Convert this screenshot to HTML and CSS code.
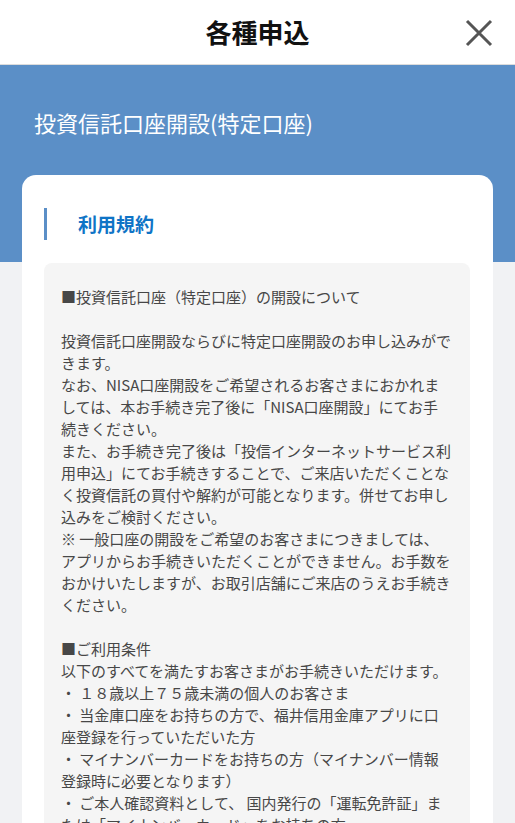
FILE: index.html
```html
<!DOCTYPE html>
<html lang="ja">
<head>
<meta charset="utf-8">
<title>各種申込</title>
<link rel="stylesheet" href="styles.css">
</head>
<body>
<header class="topbar">
  <h1 class="topbar-title">各種申込</h1>
  <button class="close-btn" type="button" aria-label="閉じる">
    <svg width="28" height="28" viewBox="0 0 28 28" aria-hidden="true">
      <path d="M2 2 L26 26 M26 2 L2 26" stroke="#555" stroke-width="3" stroke-linecap="butt" fill="none"/>
    </svg>
  </button>
</header>

<main class="page">
  <h2 class="page-title">投資信託口座開設(特定口座)</h2>

  <section class="card">
    <h3 class="card-heading">利用規約</h3>
    <div class="terms">■投資信託口座（特定口座）の開設について

投資信託口座開設ならびに特定口座開設のお申し込みがで
きます。
なお、NISA口座開設をご希望されるお客さまにおかれま
しては、本お手続き完了後に「NISA口座開設」にてお手
続きください。
また、お手続き完了後は「投信インターネットサービス利
用申込」にてお手続きすることで、ご来店いただくことな
く投資信託の買付や解約が可能となります。併せてお申し
込みをご検討ください。
※ 一般口座の開設をご希望のお客さまにつきましては、
アプリからお手続きいただくことができません。お手数を
おかけいたしますが、お取引店舗にご来店のうえお手続き
ください。

■ご利用条件
以下のすべてを満たすお客さまがお手続きいただけます。
・ １８歳以上７５歳未満の個人のお客さま
・ 当金庫口座をお持ちの方で、福井信用金庫アプリに口
座登録を行っていただいた方
・ マイナンバーカードをお持ちの方（マイナンバー情報
登録時に必要となります）
・ ご本人確認資料として、 国内発行の「運転免許証」ま
たは「マイナンバーカード」をお持ちの方</div>
  </section>
</main>
</body>
</html>
```

FILE: styles.css
```css
html, body {
  margin: 0;
  padding: 0;
}

body {
  background: #f1f2f4;
  font-family: "Noto Sans CJK JP", "Noto Sans", sans-serif;
  color: #444;
}

/* top navigation bar */
.topbar {
  height: 64px;
  background: #fff;
  border-bottom: 1px solid #dcdcdc;
  display: flex;
  align-items: center;
  justify-content: center;
  position: relative;
}

.topbar-title {
  margin: 0;
  font-size: 26px;
  font-weight: 700;
  color: #111;
  line-height: 1;
}

.close-btn {
  position: absolute;
  right: 22px;
  top: 19px;
  width: 28px;
  height: 28px;
  padding: 0;
  border: 0;
  background: none;
  display: block;
}

.close-btn svg {
  display: block;
}

/* blue band behind the title, the card overlaps it */
.page {
  background: linear-gradient(#5b8fc7 0, #5b8fc7 197px, #f1f2f4 197px);
  padding-top: 42px;
  padding-bottom: 40px;
}

.page-title {
  margin: 0 0 38px;
  padding-left: 34px;
  font-size: 22px;
  font-weight: 400;
  line-height: 30px;
  color: #fff;
}

.card {
  margin: 0 22px;
  background: #fff;
  border-radius: 14px;
  padding: 33px 23px 24px 22px;
}

.card-heading {
  margin: 0 0 23px;
  border-left: 3px solid #5b8fc7;
  padding-left: 31px;
  height: 32px;
  line-height: 32px;
  font-size: 19px;
  font-weight: 700;
  color: #0f74c6;
}

.terms {
  background: #f5f5f5;
  border-radius: 8px;
  padding: 23px 17px;
  font-size: 15px;
  line-height: 22px;
  color: #474747;
  white-space: pre-line;
}
```
